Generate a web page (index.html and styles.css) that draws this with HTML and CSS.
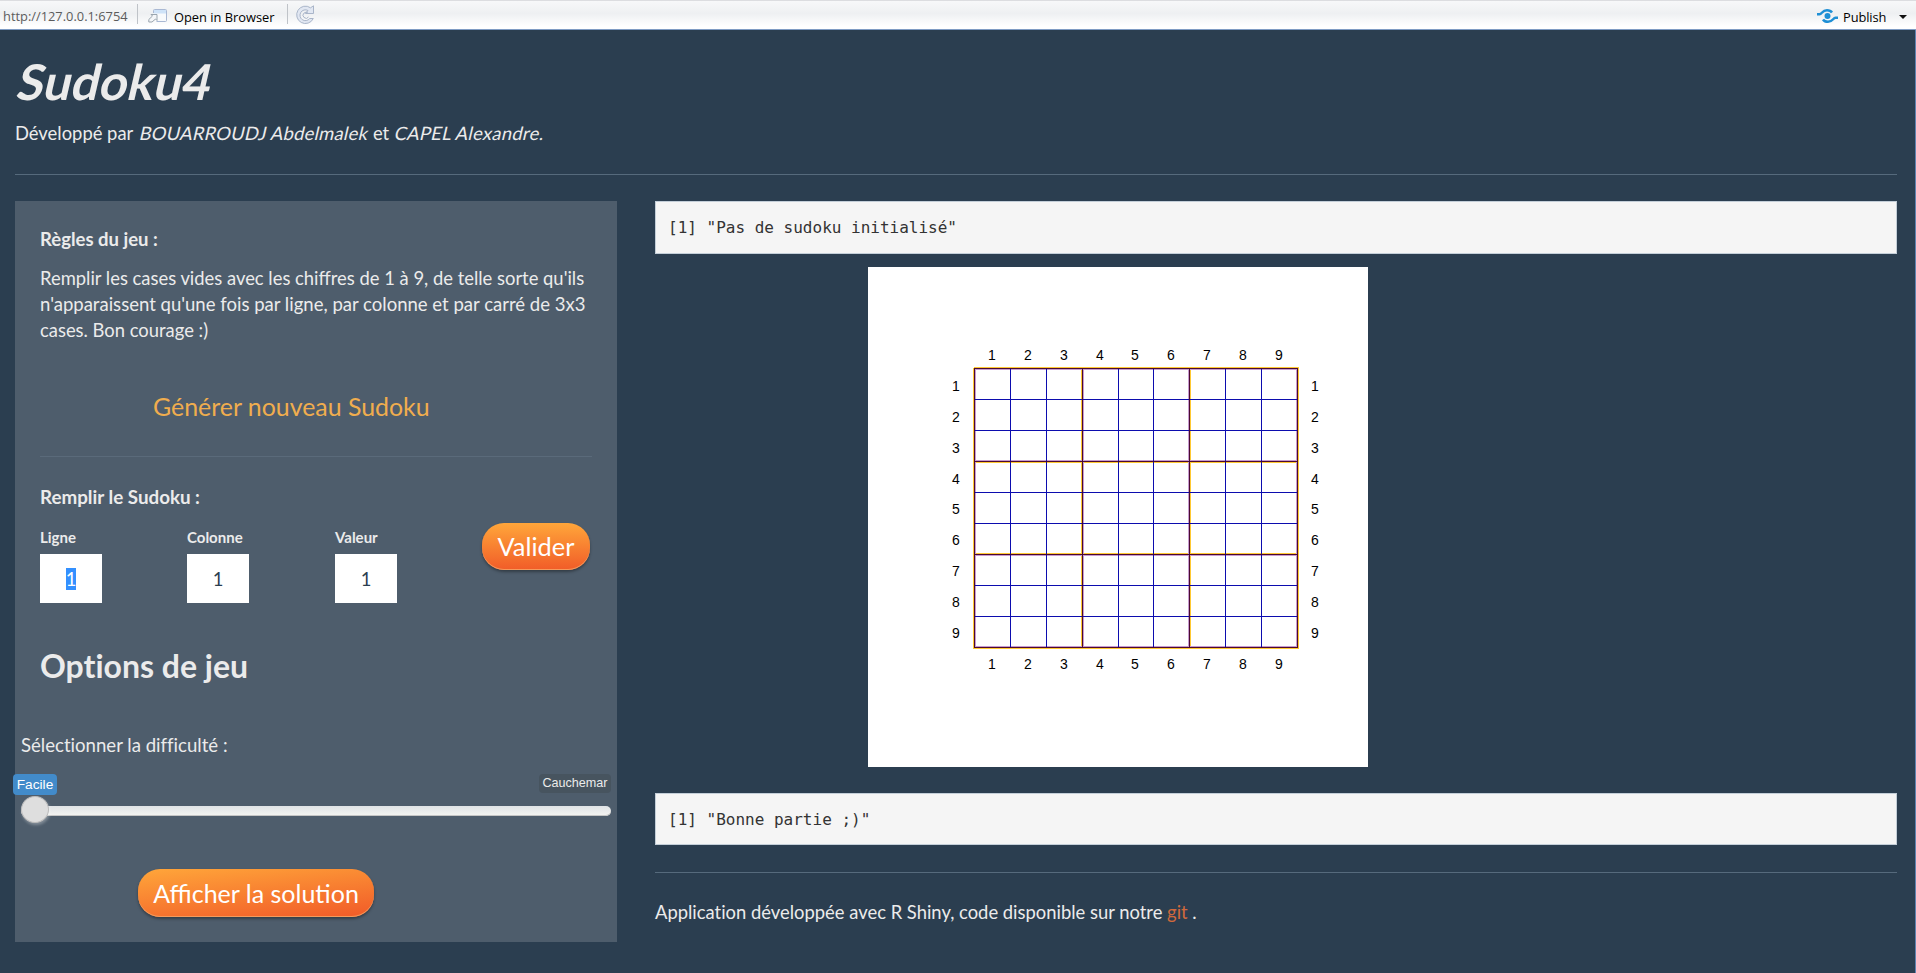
FILE: index.html
```html
<!DOCTYPE html>
<html lang="fr">
<head>
<meta charset="utf-8">
<title>Sudoku4</title>
<link rel="stylesheet" href="styles.css">
</head>
<body>
<header class="toolbar">
  <span class="url">http://127.0.0.1:6754</span>
  <span class="separator"></span>
  <svg class="open-icon" width="20" height="16" viewBox="0 0 20 16" fill="none">
    <path d="M5.500 5V2.500q0-1 1-1h11q1 0 1 1v10q0 1-1 1h-9" fill="#f8fafc" stroke="#a9b8d3"/>
    <path d="M6 2h12v3.500H6z" fill="#cfe3f8"/>
    <path d="M.8 14v-2.500L4.500 8 3 6.500h6v6L7.500 11 4 14z" fill="#f4f6f8" stroke="#9aa5ae"/>
  </svg>
  <span class="open-label">Open in Browser</span>
  <span class="separator second"></span>
  <svg class="refresh" width="19" height="20" viewBox="0 0 19 20" fill="none">
    <path d="M14.500 2.800A8.700 8.700 0 1 0 17.300 13.500h-3.600A5.400 5.400 0 1 1 12 5.500L9.500 8.500h8V.8z" fill="#e1e7f2" stroke="#a9b5c9"/>
    <path d="M12.500 8.500A3 3 0 1 0 12.500 12" stroke="#a9b5c9"/>
  </svg>
  <svg class="publish-icon" width="21" height="16" viewBox="0 0 21 16" fill="none">
    <circle cx="10.500" cy="8" r="3" fill="#1e8fd5"/>
    <path d="M0 6.200h2.500C5 6.200 5 2.200 10 2.200Q13.500 2.200 15 4.500M21 9.800h-2.500C16 9.800 16 13.800 11 13.800Q7.500 13.800 6 11.500" stroke="#1e8fd5" stroke-width="2.400"/>
  </svg>
  <span class="publish-label">Publish</span>
  <span class="caret"></span>
</header>
<main class="page">
  <h1 class="title"><span class="slanted">Sudoku4</span></h1>
  <p class="authors"><span>Développé par</span> <em class="slanted first-author">BOUARROUDJ Abdelmalek</em> <span class="and">et</span> <em class="slanted second-author">CAPEL Alexandre.</em></p>
  <hr class="rule">
  <div class="columns">
    <section class="sidebar">
      <h2 class="heading">Règles du jeu :</h2>
      <p class="rules">Remplir les cases vides avec les chiffres de 1 à 9, de telle sorte qu'ils<br><span class="wide">n'apparaissent qu'une fois par ligne, par colonne et par carré de 3x3</span><br>cases. Bon courage :)</p>
      <a class="generate">Générer nouveau Sudoku</a>
      <hr class="side-rule">
      <h2 class="heading fill">Remplir le Sudoku :</h2>
      <div class="form">
        <div class="field"><span class="label">Ligne</span><div class="input"><span class="selected">1</span></div></div>
        <div class="field"><span class="label">Colonne</span><div class="input">1</div></div>
        <div class="field"><span class="label">Valeur</span><div class="input">1</div></div>
        <button class="button validate">Valider</button>
      </div>
      <h2 class="options">Options de jeu</h2>
      <div class="difficulty">
        <span class="difficulty-label">Sélectionner la difficulté :</span>
        <div class="slider-labels"><span class="easy">Facile</span><span class="hard">Cauchemar</span></div>
        <div class="track"><span class="handle"></span></div>
      </div>
      <button class="button solution">Afficher la solution</button>
    </section>
    <section class="content">
      <pre class="output">[1] "Pas de sudoku initialisé"</pre>
      <svg class="plot" width="500" height="500" viewBox="868 267 500 500">
        <g fill="none" shape-rendering="crispEdges">
          <path stroke="#ffc933" stroke-width="1" d="M973.500 367.500H1298.500M973.500 367.500V648.500M1298.500 367.500V648.500M973.500 648.500H1298.500M975 462.500H1297M975 553.500H1297M1081.500 369V648M1190.500 369V648"/>
          <path stroke="#c79bd0" stroke-width="1" d="M975.500 369.500H1296.500V646.500H975.500zM975 460.500H1297M975 555.500H1297M1083.500 369V648M1188.500 369V648"/>
          <path stroke="#0c0cae" d="M1010.500 369V647M1046.500 369V647M1118.500 369V647M1153.500 369V647M1225.500 369V647M1261.500 369V647M975 399.500H1297M975 430.500H1297M975 492.500H1297M975 523.500H1297M975 585.500H1297M975 616.500H1297"/>
          <path stroke="#4a0a30" d="M974.500 368.500H1297.500V647.500H974.500zM974 461.500H1298M974 554.500H1298M1082.500 368V648M1189.500 368V648"/>
        </g>
        <g class="digits">
          <text x="992" y="360">1</text><text x="1028" y="360">2</text><text x="1064" y="360">3</text><text x="1100" y="360">4</text><text x="1135" y="360">5</text><text x="1171" y="360">6</text><text x="1207" y="360">7</text><text x="1243" y="360">8</text><text x="1279" y="360">9</text>
          <text x="992" y="669">1</text><text x="1028" y="669">2</text><text x="1064" y="669">3</text><text x="1100" y="669">4</text><text x="1135" y="669">5</text><text x="1171" y="669">6</text><text x="1207" y="669">7</text><text x="1243" y="669">8</text><text x="1279" y="669">9</text>
          <text x="956" y="391">1</text><text x="956" y="422">2</text><text x="956" y="453">3</text><text x="956" y="484">4</text><text x="956" y="514">5</text><text x="956" y="545">6</text><text x="956" y="576">7</text><text x="956" y="607">8</text><text x="956" y="638">9</text>
          <text x="1315" y="391">1</text><text x="1315" y="422">2</text><text x="1315" y="453">3</text><text x="1315" y="484">4</text><text x="1315" y="514">5</text><text x="1315" y="545">6</text><text x="1315" y="576">7</text><text x="1315" y="607">8</text><text x="1315" y="638">9</text>
        </g>
      </svg>
      <pre class="output last">[1] "Bonne partie ;)"</pre>
      <hr class="rule footer-rule">
      <p class="footer">Application développée avec R Shiny, code disponible sur notre <a class="git">git</a> .</p>
    </section>
  </div>
</main>
</body>
</html>
```
FILE: styles.css
```css
* { box-sizing: border-box; }
body { margin: 0; height: 973px; overflow: hidden; background: #2b3e50; color: #ebebeb; font: 18.4px/26px Lato, sans-serif; }
h1, h2, p, pre { margin: 0; }
hr { height: 1px; border: 0; margin: 0; background: #566a7c; }

/* Viewer toolbar */
.toolbar { height: 30px; display: flex; align-items: flex-start; padding: 0 9px 0 3px; border-top: 1px solid #dcdde0; border-bottom: 1px solid #7f9cc4; background: linear-gradient(#f7f8f9, #eef0f2 45%, #fff 90%); color: #000; font: 12.85px/18px "Open Sans", sans-serif; white-space: nowrap; }
.url { width: 134px; margin-top: 6px; color: #5c5c5c; }
.separator { width: 1px; height: 20px; margin-top: 3px; background: #bfc3c8; }
.open-icon { margin: 7px 6px 0 10px; }
.open-label { width: 113px; margin-top: 7px; }
.refresh { margin: 4px auto 0 8px; }
.publish-icon { margin-top: 7px; margin-right: 5px; }
.publish-label { width: 56px; margin-top: 7px; letter-spacing: -.1px; }
.caret { margin-top: 14px; border: 4px solid transparent; border-top: 4px solid #111; border-bottom: 0; }

/* Page header */
.page { padding: 24px 18px 0 15px; border-right: 1px solid #5f83b0; height: 943px; }
.title { padding-left: 4px; font-size: 49.3px; line-height: 54px; }
.slanted { display: inline-block; font-style: normal; transform: skewX(-13deg); }
.authors { margin-top: 12px; white-space: nowrap; }
.first-author { margin-left: 2px; letter-spacing: .25px; }
.second-author { margin-left: 1px; letter-spacing: .3px; }
.rule { margin-top: 28px; }
.columns { display: flex; gap: 38px; margin-top: 26px; }

/* Side panel */
.sidebar { width: 602px; height: 741px; padding: 25px; background: #4e5d6c; white-space: nowrap; }
.heading { font-size: 18.5px; line-height: 26px; }
.rules { margin-top: 13px; }
.wide { font-size: 18.55px; }
.generate { display: block; margin-top: 45px; padding-left: 113px; font-size: 24.900px; line-height: 36px; color: #f0ad4e; }
.side-rule { margin-top: 32px; background: #5a6a7a; }
.fill { margin-top: 27px; font-size: 18.8px; }
.form { display: grid; grid-template-columns: 147px 148px 147px 108px; height: 80px; margin-top: 13px; }
.field { padding-top: 4px; }
.label { display: block; font-size: 15px; line-height: 20px; font-weight: 700; }
.input { width: 62px; height: 49px; margin-top: 7px; background: #fff; color: #2b3e50; line-height: 50px; text-align: center; }
.selected { background: #3390ff; color: #fff; }
.button { border: 0; padding: 0; border-radius: 22px; background: linear-gradient(#ffa63a, #f15c28); color: #fff; font: 25px/46px Lato, sans-serif; box-shadow: 0 2px 3px rgba(0, 0, 0, .35), inset 0 -1px 0 #f49a5c; }
.validate { width: 108px; height: 47px; font-size: 25.400px; line-height: 45px; }
.options { margin-top: 45px; font-size: 32px; line-height: 36px; font-variant-ligatures: none; }
.difficulty { margin: 48px -19px 0; }
.difficulty-label { display: block; font-size: 18.6px; font-variant-ligatures: none; }
.slider-labels { display: flex; justify-content: space-between; align-items: flex-start; height: 21px; margin: 16px 0 0 -8px; font-family: "Liberation Sans", sans-serif; text-align: center; }
.easy { width: 44px; border-radius: 4px; background: #428bca; color: #fff; font-size: 13.700px; line-height: 21px; }
.hard { width: 72px; border-radius: 4px; background: #47545f; font-size: 12.600px; line-height: 19px; }
.track { display: flex; align-items: center; height: 10px; margin-top: 11px; border-radius: 8px; background: linear-gradient(#dfe3e6, #f4f4f2); box-shadow: inset 0 -1px 0 #c5c5c5; }
.handle { width: 28px; height: 27px; margin-top: -3px; border: 1px solid #bbb; border-radius: 50%; background: #dedede; box-shadow: 1px 2px 3px rgba(255, 255, 255, .3); }
.solution { display: block; width: 236px; height: 48px; margin: 53px 0 0 98px; background: linear-gradient(174deg, #ffa63a, #f15a28); line-height: 46px; }

/* Main column */
.content { flex: 1; }
.output { height: 53px; padding: 14px 12px; border: 1px solid #c3ced8; background: #f5f5f5; color: #333; font: 16px/23px "DejaVu Sans Mono", monospace; }
.plot { display: block; margin: 13px 0 26px 213px; background: #fff; }
.digits { font: 14px "Liberation Sans", sans-serif; text-anchor: middle; fill: #000; }
.last { height: 52px; }
.footer-rule { margin-top: 27px; }
.footer { margin-top: 26px; font-variant-ligatures: none; }
.git { color: #d0693c; }
```
